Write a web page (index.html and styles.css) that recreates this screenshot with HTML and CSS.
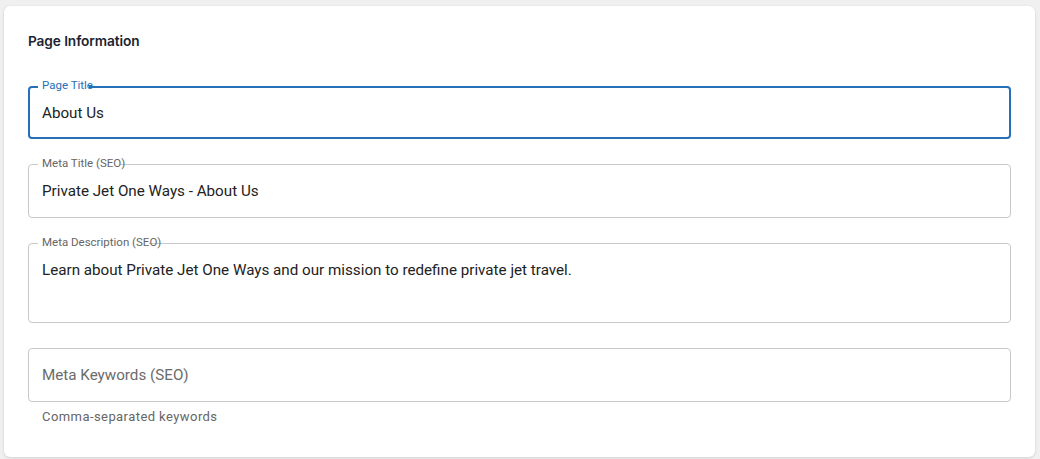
FILE: index.html
```html
<!DOCTYPE html>
<html lang="en">
<head>
<meta charset="utf-8">
<title>Page Information</title>
<link rel="stylesheet" href="styles.css">
</head>
<body>
<div class="page">
  <section class="card">
    <h2 class="card-title">Page Information</h2>
    <div class="fields">
      <div class="field focused">
        <label class="field-label">Page Title</label>
        <span class="notch notch-1"></span>
        <div class="field-value">About Us</div>
      </div>
      <div class="field">
        <label class="field-label">Meta Title (SEO)</label>
        <span class="notch notch-2"></span>
        <div class="field-value">Private Jet One Ways - About Us</div>
      </div>
      <div class="field multiline">
        <label class="field-label">Meta Description (SEO)</label>
        <span class="notch notch-3"></span>
        <div class="field-value">Learn about Private Jet One Ways and our mission to redefine private jet travel.</div>
      </div>
      <div class="field-group">
        <div class="field">
          <div class="field-value placeholder">Meta Keywords (SEO)</div>
        </div>
        <p class="helper">Comma-separated keywords</p>
      </div>
    </div>
  </section>
</div>
</body>
</html>
```

FILE: styles.css
```css
* { box-sizing: border-box; }
html, body { margin: 0; padding: 0; }
body {
  background: #f0f0f0;
  font-family: Roboto, "Liberation Sans", sans-serif;
  width: 1040px;
  height: 459px;
  overflow: hidden;
}
.page {
  padding: 6px 5px 0 4px;
}
.card {
  background: #ffffff;
  border-radius: 6px;
  box-shadow: 0 1px 3px rgba(0,0,0,0.12), 0 0 1px rgba(0,0,0,0.08);
  height: 451px;
  padding: 25px 24px 0 24px;
}
.card-title {
  margin: 0;
  font-family: Inter, "Noto Sans", sans-serif;
  font-weight: 600;
  font-size: 13.7px;
  line-height: 20px;
  color: #1b2430;
  letter-spacing: -0.1px;
}
.fields {
  margin-top: 35px;
  display: flex;
  flex-direction: column;
  gap: 25px;
}
.field {
  position: relative;
  height: 54px;
  border: 1px solid #c8c8c8;
  border-radius: 4px;
  display: flex;
  align-items: center;
  padding: 0 13px;
}
.field.focused {
  border: 2px solid #2670b8;
  padding: 0 12px;
  height: 53px;
}
.field.multiline {
  height: 80px;
  align-items: flex-start;
  padding-top: 15px;
}
.field-value {
  font-size: 15.2px;
  line-height: 22px;
  color: #222222;
}
.field-value.placeholder {
  color: #6b6b6b;
}
.field-label {
  position: absolute;
  left: 13px;
  top: -9px;
  z-index: 2;
  font-size: 11.5px;
  line-height: 15px;
  color: #666666;
}
.focused .field-label {
  left: 12px;
  top: -10px;
  color: #2670b8;
}
.notch {
  position: absolute;
  top: -2px;
  left: 9px;
  height: 3px;
  background: #ffffff;
  z-index: 1;
}
.focused .notch { top: -3px; left: 8px; height: 4px; }
.notch-1 { width: 51px; }
.notch-2 { width: 82px; }
.notch-3 { width: 111px; }
.helper {
  margin: 6px 0 0 14px;
  font-size: 13px;
  line-height: 17px;
  color: #666666;
  letter-spacing: 0.43px;
}
```
